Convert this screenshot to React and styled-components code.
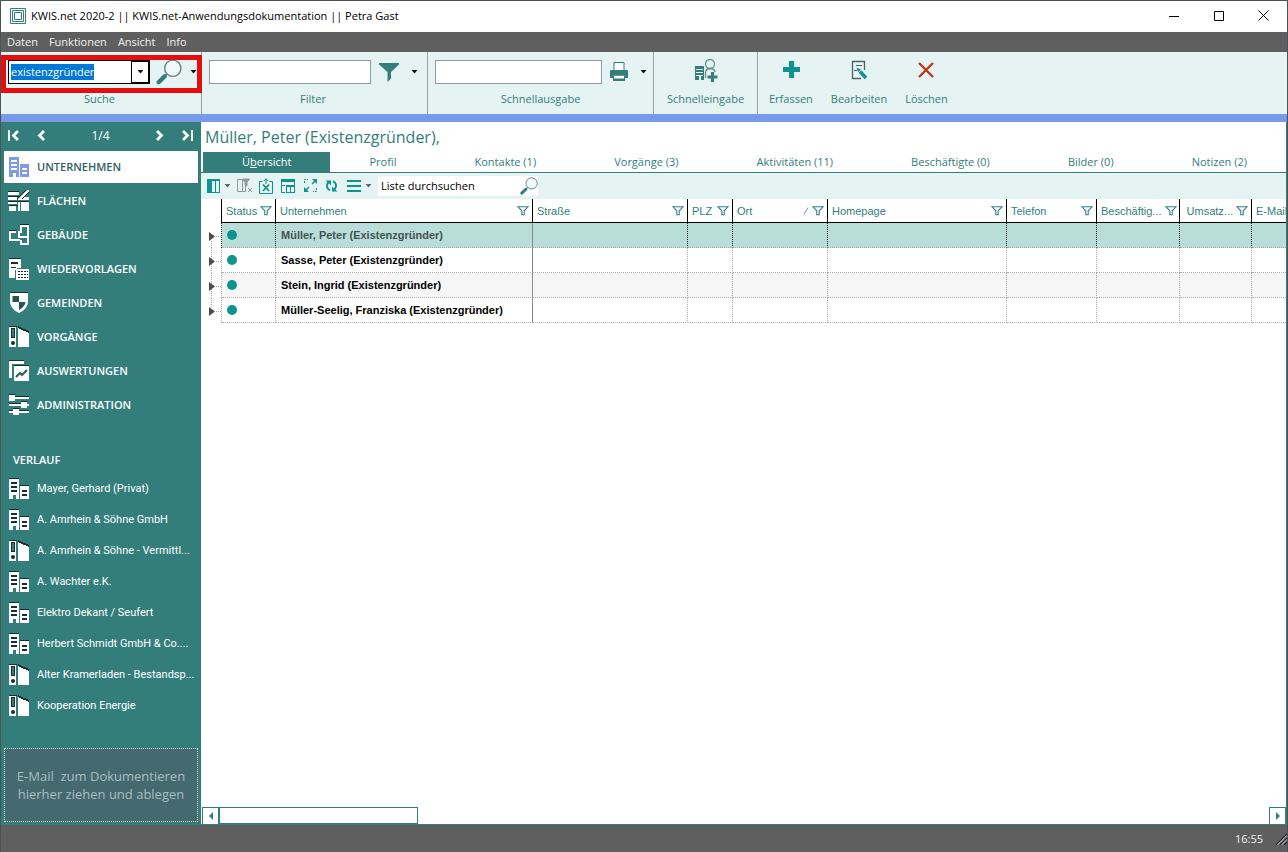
import { useEffect, useRef } from "react";
import styled, { createGlobalStyle, css } from "styled-components";

const teal = "#337e7b";
const bright = "#0f9390";
const pale = "#e5f4f3";
const grey = "#5f5f5f";
const ink = "#16302f";

const navItems = [
  { label: "UNTERNEHMEN", icon: "company", active: true },
  { label: "FLÄCHEN", icon: "areas" },
  { label: "GEBÄUDE", icon: "floorplan" },
  { label: "WIEDERVORLAGEN", icon: "followup" },
  { label: "GEMEINDEN", icon: "shield" },
  { label: "VORGÄNGE", icon: "binder" },
  { label: "AUSWERTUNGEN", icon: "report" },
  { label: "ADMINISTRATION", icon: "sliders" },
];

const historyItems = [
  { label: "Mayer, Gerhard (Privat)", icon: "company" },
  { label: "A. Amrhein & Söhne GmbH", icon: "company" },
  { label: "A. Amrhein & Söhne - Vermittl...", icon: "binder" },
  { label: "A. Wachter e.K.", icon: "company" },
  { label: "Elektro Dekant / Seufert", icon: "company" },
  { label: "Herbert Schmidt GmbH & Co....", icon: "company" },
  { label: "Alter Kramerladen - Bestandsp...", icon: "binder" },
  { label: "Kooperation Energie", icon: "binder" },
];

const tabs = [
  "Profil",
  "Kontakte (1)",
  "Vorgänge (3)",
  "Aktivitäten (11)",
  "Beschäftigte (0)",
  "Bilder (0)",
  "Notizen (2)",
];

const columns = [
  { label: "Status", width: 54 },
  { label: "Unternehmen", width: 257, solid: true },
  { label: "Straße", width: 155 },
  { label: "PLZ", width: 45 },
  { label: "Ort", width: 95, sorted: true },
  { label: "Homepage", width: 179 },
  { label: "Telefon", width: 90 },
  { label: "Beschäftig...", width: 83, right: true },
  { label: "Umsatz...", width: 72, right: true },
  { label: "E-Mail", width: 160 },
];

const rows = [
  "Müller, Peter (Existenzgründer)",
  "Sasse, Peter (Existenzgründer)",
  "Stein, Ingrid (Existenzgründer)",
  "Müller-Seelig, Franziska (Existenzgründer)",
];

function SideIcon({ name, active }) {
  const fill = active ? "#8099e6" : "#fff";
  const line = active ? "#fff" : ink;
  return (
    <Svg width="22" height="22" viewBox="0 0 22 22" fill={fill} shapeRendering="crispEdges">
      {name === "company" && (
        <>
          {!active && <path fill={ink} d="M1 0h10v1H1zM12 7h9v1h-9z" />}
          <path d="M1 1h10v20H8v-4H5v4H1zM12 8h9v13h-9z" />
          <path fill={line} d="M3 4h6v2H3zM3 8h6v2H3zM3 12h6v2H3zM14 12h5v2h-5zM14 16h5v2h-5z" />
        </>
      )}
      {name === "areas" && (
        <>
          <path fill={ink} d="M0 1h11v1H0zM0 6h11v1H0zM0 11h21v1H0zM12 7h9v1h-9zM1 15h9v1H1z" />
          <path d="M0 2h11v3H0zM0 7h9v3H0zM0 12h9v2H0zM1 16h7v5H1zM10 12h2v9h-2zM13 12h8v9h-8z" />
          <path d="M10 9 19 0h2v2l-5 5h5v3H10z" shapeRendering="auto" />
          <path d="M9 9 18 0M14 9l7-7" stroke={ink} fill="none" shapeRendering="auto" />
        </>
      )}
      {name === "floorplan" && (
        <>
          <path d="M12 1h9v20h-9v-5h2v3h5V3h-5v4h-2zM1 7h7v2H3v6h9v2H1zM10 7h4v2h-2v3h7v2h-9z" />
          <path fill={ink} d="M12 0h9v1h-9zM1 6h7v1H1z" />
        </>
      )}
      {name === "followup" && (
        <>
          <path fill={ink} d="M1 0h12v1H1z" />
          <path d="M1 1h12v9H9v2H7v8H1zM8 11h13v11H8z" />
          <path fill={ink} d="M3 4h7v2H3zM3 9h5v1H3z" />
          <path
            fill={ink}
            d="M10 13h2v1h-2zM13 13h2v1h-2zM16 13h2v1h-2zM10 16h2v1h-2zM13 16h2v1h-2zM16 16h2v1h-2zM10 19h2v1h-2zM13 19h2v1h-2zM16 19h2v1h-2zM19 13h1v1h-1zM19 16h1v1h-1zM19 19h1v1h-1z"
          />
        </>
      )}
      {name === "shield" && (
        <g shapeRendering="auto">
          <path fill={ink} d="M2 0h18v2H2z" />
          <path d="M2 1h18v8c0 6-4 9.500-9 12-5-2.500-9-6-9-12z" />
          <path fill="#235553" d="M4.500 4H11v6H4.500zM11 10h6.500c-.4 3.500-3 6-6.500 8z" />
        </g>
      )}
      {name === "binder" && (
        <>
          <path fill={ink} d="M1 0h8v1H1zM10 0l11 5v2L10 2z" />
          <path d="M1 1h7v20H1zM10 2l11 5v14H10z" />
          <path fill={ink} d="M3 2h4v10H3z" />
          <path fill={teal} d="M4 3h2v8H4z" />
          <circle cx="5" cy="17" r="2" fill={ink} shapeRendering="auto" />
        </>
      )}
      {name === "report" && (
        <>
          <path fill={ink} d="M1 0h15v1H1zM6 5h15v1H6z" />
          <path d="M1 1h15v3H4v14H1zM6 6h15v15H6z" />
          <path
            d="m8 17 4-4 2 2 5-5"
            fill="none"
            stroke="#2b5f5d"
            strokeWidth="2"
            shapeRendering="auto"
          />
        </>
      )}
      {name === "sliders" && (
        <>
          <path fill={ink} d="M1 0h6v1H1zM7 2h14v1H7zM1 9h12v1H1zM13 7h6v1h-6zM1 16h4v1H1zM11 16h10v1H11zM5 14h6v1H5z" />
          <path d="M1 3h20v2H1zM1 10h20v2H1zM1 17h20v2H1zM1 1h6v6H1zM13 8h6v6h-6zM5 15h6v6H5z" />
        </>
      )}
    </Svg>
  );
}

function Magnifier({ size }) {
  return (
    <Svg width={size} height={size} viewBox="0 0 24 24" fill="none">
      <circle cx="15.500" cy="8.500" r="7.500" stroke="#6c7f80" strokeWidth="1.300" fill="#eefafa" />
      <path d="m10 14-3 3" stroke="#6c7f80" strokeWidth="1.300" />
      <path d="m8 16-5.500 5.500" stroke={teal} strokeWidth="4" strokeLinecap="round" />
    </Svg>
  );
}

function Caret({ color = "#111" }) {
  return (
    <Svg width="7" height="4" viewBox="0 0 7 4" fill={color}>
      <path d="M.5 0h6L3.500 3.500z" />
    </Svg>
  );
}

function FunnelOutline() {
  return (
    <Svg width="12" height="10" viewBox="0 0 12 10" fill="none" stroke="#2f7f86" strokeWidth="1.100">
      <path d="M1 .8h10L7.200 4.800v4H4.800v-4z" />
    </Svg>
  );
}

function Chevron({ dir, bar }) {
  const d = dir === "left" ? "M10 2 5.500 6.500 10 11" : "M4 2 8.500 6.500 4 11";
  const barD = dir === "left" ? "M12 2 7.500 6.500 12 11" : "M2 2 6.500 6.500 2 11";
  return (
    <Svg width="14" height="13" viewBox="0 0 14 13" fill="none" stroke="#fff" strokeWidth="2.800">
      <path d={bar ? barD : d} />
      {bar && <path d={dir === "left" ? "M3 1v11" : "M11 1v11"} strokeWidth="2" />}
    </Svg>
  );
}

export default function App() {
  const searchRef = useRef(null);

  useEffect(() => {
    searchRef.current.focus();
    searchRef.current.select();
  }, []);

  return (
    <>
      <GlobalStyle />
      <Window>
        <TitleBar>
          <Svg width="16" height="16" viewBox="0 0 16 16" fill="none" stroke={teal}>
            <path d="M.5.5h15v15H.5zM2.500 2.500h11v11h-11zM4.500 4.500h7v7h-7z" />
          </Svg>
          <WindowTitle>KWIS.net 2020-2 || KWIS.net-Anwendungsdokumentation || Petra Gast</WindowTitle>
          <WindowButton type="button" aria-label="Minimieren">
            <Svg width="10" height="10" viewBox="0 0 10 10" stroke="#000">
              <path d="M0 5.500h10" />
            </Svg>
          </WindowButton>
          <WindowButton type="button" aria-label="Maximieren">
            <Svg width="10" height="10" viewBox="0 0 10 10" stroke="#000" fill="none">
              <path d="M.5.5h9v9h-9z" />
            </Svg>
          </WindowButton>
          <WindowButton type="button" aria-label="Schließen">
            <Svg width="11" height="11" viewBox="0 0 11 11" stroke="#000">
              <path d="m.5.5 10 10m0-10-10 10" />
            </Svg>
          </WindowButton>
        </TitleBar>

        <MenuBar>
          <MenuButton type="button">Daten</MenuButton>
          <MenuButton type="button">Funktionen</MenuButton>
          <MenuButton type="button">Ansicht</MenuButton>
          <MenuButton type="button">Info</MenuButton>
        </MenuBar>

        <Ribbon>
          <Group $width={201} $end={3}>
            <GroupRow>
              <Combo>
                <ComboInput ref={searchRef} aria-label="Suche" defaultValue="existenzgründer" />
                <ComboButton type="button" aria-label="Suchverlauf öffnen">
                  <Caret />
                </ComboButton>
              </Combo>
              <IconButton type="button" aria-label="Suchen">
                <Magnifier size={26} />
              </IconButton>
              <CaretButton type="button" aria-label="Suchoptionen">
                <Caret />
              </CaretButton>
            </GroupRow>
            <GroupLabel>Suche</GroupLabel>
            <Highlight />
          </Group>

          <Group $width={226} $end={3}>
            <GroupRow>
              <RibbonInput id="filter" />
              <IconButton type="button" aria-label="Filtern">
                <Svg width="20" height="19" viewBox="0 0 20 19" fill={teal}>
                  <path d="M0 0h20v1.500L12 9v6.500L8.500 19V9L0 1.500z" />
                </Svg>
              </IconButton>
              <CaretButton type="button" aria-label="Filteroptionen">
                <Caret />
              </CaretButton>
            </GroupRow>
            <GroupLabel as="label" htmlFor="filter">
              Filter
            </GroupLabel>
          </Group>

          <Group $width={226}>
            <GroupRow>
              <RibbonInput id="output" />
              <IconButton type="button" aria-label="Drucken">
                <Svg width="18" height="20" viewBox="0 0 18 20" fill={teal}>
                  <path d="M4 .5h10v8H4z" fill="#fff" stroke={teal} />
                  <path d="M1 8h16q1 0 1 1v7h-3v-2.500H3V16H0V9q0-1 1-1z" />
                  <path d="M3 13.500h12V19H3z" />
                  <path d="M4 14h10v2.500H4z" fill="#fff" />
                </Svg>
              </IconButton>
              <CaretButton type="button" aria-label="Druckoptionen">
                <Caret />
              </CaretButton>
            </GroupRow>
            <GroupLabel as="label" htmlFor="output">
              Schnellausgabe
            </GroupLabel>
          </Group>

          <Group $width={104}>
            <ActionButton type="button">
              <Svg width="24" height="24" viewBox="0 0 24 24" fill={teal}>
                <path d="M1 8h9v14H7v-4H5v4H1z" />
                <path d="M2 11.500h7M2 14.500h7M2 17.500h7" stroke={pale} />
                <circle cx="16" cy="6" r="4.500" fill={pale} stroke="#5f8f8f" strokeWidth="1.300" />
                <path d="M11.500 20v-5q0-4.500 4.500-4.500t5 3.500" fill="none" stroke="#5f8f8f" strokeWidth="1.300" />
                <path d="M17 14h3v3.500h3.500v3H20V24h-3v-3.500h-3.500v-3H17z" />
              </Svg>
              Schnelleingabe
            </ActionButton>
          </Group>

          <Actions>
            <ActionButton type="button">
              <Svg width="24" height="24" viewBox="0 0 24 24" fill={bright} shapeRendering="crispEdges">
                <path d="M10 3h5v6h6v5h-6v6h-5v-6H4V9h6z" />
              </Svg>
              Erfassen
            </ActionButton>
            <ActionButton type="button">
              <Svg width="24" height="24" viewBox="0 0 24 24" fill="none">
                <path d="M17.500 12V3.500h-12v17H14" stroke="#4c6364" strokeWidth="1.300" />
                <path d="M9 7.500h6M7 12.500h3" stroke="#4c6364" />
                <path d="m13 13.500 6 6.500" stroke={bright} strokeWidth="3.600" />
                <path d="m9.500 9.500 4.500 2-3 2.800z" fill={bright} />
              </Svg>
              Bearbeiten
            </ActionButton>
            <ActionButton type="button">
              <Svg width="24" height="24" viewBox="0 0 24 24" stroke="#b83d14" strokeWidth="2.400">
                <path d="m4 5 14 14M18 5 4 19" />
              </Svg>
              Löschen
            </ActionButton>
          </Actions>
        </Ribbon>

        <Body>
          <Sidebar>
            <Pager>
              <PagerButton type="button" aria-label="Erster Datensatz">
                <Chevron dir="left" bar />
              </PagerButton>
              <PagerButton type="button" aria-label="Vorheriger Datensatz">
                <Chevron dir="left" />
              </PagerButton>
              <PagerText>1/4</PagerText>
              <PagerButton type="button" aria-label="Nächster Datensatz">
                <Chevron dir="right" />
              </PagerButton>
              <PagerButton type="button" aria-label="Letzter Datensatz">
                <Chevron dir="right" bar />
              </PagerButton>
            </Pager>
            <Nav>
              {navItems.map(({ label, icon, active }) => (
                <NavLink key={label} href="#" $active={active}>
                  <SideIcon name={icon} active={active} />
                  {label}
                </NavLink>
              ))}
            </Nav>
            <HistoryTitle>VERLAUF</HistoryTitle>
            <History>
              {historyItems.map(({ label, icon }) => (
                <HistoryLink key={label} href="#">
                  <SideIcon name={icon} />
                  {label}
                </HistoryLink>
              ))}
            </History>
            <DropZone>
              E-Mail {"\u00a0"}zum Dokumentieren
              <br />
              hierher ziehen und ablegen
            </DropZone>
          </Sidebar>

          <Main>
            <RecordTitle>Müller, Peter (Existenzgründer),</RecordTitle>
            <Tabs role="tablist">
              <Tab type="button" role="tab" aria-selected="true" $active>
                Ü<u>b</u>ersicht
              </Tab>
              {tabs.map((label) => (
                <Tab key={label} type="button" role="tab" aria-selected="false">
                  {label}
                </Tab>
              ))}
            </Tabs>

            <ListTools>
              <ToolButton type="button" aria-label="Spalten">
                <Svg width="16" height="16" viewBox="0 0 16 16" fill={bright} shapeRendering="crispEdges">
                  <path d="M1 1h13v14H1z" />
                  <path d="M6 3h3v11H6zM10 3h3v11h-3z" fill={pale} />
                </Svg>
                <Caret color="#666" />
              </ToolButton>
              <ToolButton type="button" aria-label="Filter entfernen">
                <Svg width="16" height="16" viewBox="0 0 16 16" fill="none" stroke="#8b9a9a">
                  <path d="M.5 1.500h5v12h-5zM8.500 7v6.500H5.500" />
                  <path d="M5.500 1h7L10 4.500V8L8 7V4.500z" fill="#8b9a9a" />
                  <path d="m11 10 4 4m0-4-4 4" />
                </Svg>
              </ToolButton>
              <ToolButton type="button" aria-label="Excel-Export">
                <Svg width="16" height="16" viewBox="0 0 16 16" fill="none" stroke={bright}>
                  <path d="M3.500 3.500H.5v12h13v-12h-3" />
                  <path d="m4 6.500 6 6.500m0-6.500-6 6.500" strokeWidth="1.800" />
                  <path d="M7 6V.8M4.800 3 7 .8 9.200 3" />
                </Svg>
              </ToolButton>
              <ToolButton type="button" aria-label="Ansicht speichern">
                <Svg width="16" height="16" viewBox="0 0 16 16" fill="none" stroke={bright} shapeRendering="crispEdges">
                  <path d="M0 1h14v3H0z" fill={bright} stroke="none" />
                  <path d="M.5 4v10.500H4M0 7.500h4M13.500 4v3" />
                  <path d="M5.500 7.500h8v7h-8zM5 8.500h9M9.500 8v7" />
                </Svg>
              </ToolButton>
              <ToolButton type="button" aria-label="Vollbild">
                <Svg width="16" height="16" viewBox="0 0 16 16" fill={bright}>
                  <path d="M9 1h5v5zM1 9v5h5z" />
                  <path d="m9 6 3-3M3 12l3-3" stroke={bright} strokeWidth="1.500" />
                  <path d="M1.500 5V1.500H5M13.500 10v3.500H10" fill="none" stroke={bright} strokeDasharray="2 1" />
                </Svg>
              </ToolButton>
              <ToolButton type="button" aria-label="Aktualisieren">
                <Svg width="16" height="16" viewBox="0 0 16 16" fill="none" stroke={bright} strokeWidth="2">
                  <path d="M5 12.500C1.500 10.500 1 7 3.500 4.200M8 3.200c3.500 1.800 4 5.300 1.500 8.300" />
                  <path d="M.5 2.500h5.500v5zM12.500 13.500H7v-5z" fill={bright} stroke="none" />
                </Svg>
              </ToolButton>
              <ToolButton type="button" aria-label="Menü">
                <Svg width="16" height="16" viewBox="0 0 16 16" fill={bright} shapeRendering="crispEdges">
                  <path d="M0 2h14v2H0zM0 7h14v2H0zM0 12h14v2H0z" />
                </Svg>
                <Caret color="#666" />
              </ToolButton>
              <ListSearch>
                <ListSearchInput aria-label="Liste durchsuchen" defaultValue="Liste durchsuchen" />
                <IconButton type="button" aria-label="Liste durchsuchen starten">
                  <Magnifier size={18} />
                </IconButton>
              </ListSearch>
            </ListTools>

            <TableScroll>
              <Table>
                <colgroup>
                  <col width="21" />
                  {columns.map(({ label, width }) => (
                    <col key={label} width={width} />
                  ))}
                </colgroup>
                <thead>
                  <tr>
                    <GutterHead aria-label="Details" />
                    {columns.map(({ label, sorted, right }) => (
                      <HeadCell key={label} scope="col">
                        <HeadContent>
                          <HeadText $right={right}>{label}</HeadText>
                          {sorted && (
                            <Svg width="6" height="8" viewBox="0 0 6 8" stroke="#8b9a9a">
                              <path d="M1 7.500 5 .5" />
                            </Svg>
                          )}
                          <FunnelOutline />
                        </HeadContent>
                      </HeadCell>
                    ))}
                  </tr>
                </thead>
                <tbody>
                  {rows.map((name, i) => (
                    <Row key={name} $selected={i === 0} $striped={i === 2}>
                      <Gutter>
                        <Svg width="20" height="25" viewBox="0 0 20 25" fill="none" shapeRendering="crispEdges">
                          <path
                            d={i === 0 ? "M10.500 18v7" : i === rows.length - 1 ? "M10.500 0v9" : "M10.500 0v25"}
                            stroke="#aaa"
                            strokeDasharray="1 1"
                          />
                          <path d="M15 13.500h5" stroke="#aaa" strokeDasharray="1 1" />
                          <path d="M8 9v9l6-4.500z" fill="#4c4c4c" shapeRendering="auto" />
                        </Svg>
                      </Gutter>
                      {columns.map(({ label, solid }, c) => (
                        <Cell key={label} $solid={solid} $selected={i === 0}>
                          {c === 0 && <StatusDot />}
                          {c === 1 && name}
                        </Cell>
                      ))}
                    </Row>
                  ))}
                </tbody>
              </Table>
            </TableScroll>

            <ScrollBar>
              <ScrollButton type="button" aria-label="Nach links">
                <Svg width="4" height="8" viewBox="0 0 4 8" fill={teal}>
                  <path d="M4 0v8L0 4z" />
                </Svg>
              </ScrollButton>
              <ScrollThumb />
              <ScrollButton type="button" aria-label="Nach rechts">
                <Svg width="4" height="8" viewBox="0 0 4 8" fill={teal}>
                  <path d="M0 0v8l4-4z" />
                </Svg>
              </ScrollButton>
            </ScrollBar>
          </Main>
        </Body>

        <StatusBar>
          <span>16:55</span>
          <Svg width="12" height="12" viewBox="0 0 12 12" stroke="#1d1d1d" strokeWidth="1.200">
            <path d="M1 12 12 1M5 12l7-7M9 12l3-3" />
            <path d="M2.500 12 12 2.500M6.500 12 12 6.500" stroke="#a5a5a5" />
          </Svg>
        </StatusBar>
      </Window>
    </>
  );
}

const GlobalStyle = createGlobalStyle`
  * {
    box-sizing: border-box;
  }

  body {
    margin: 0;
    font-family: "Open Sans", "Noto Sans", sans-serif;
    font-size: 11px;
    line-height: 16px;
    color: ${teal};
  }

  button,
  input {
    font: inherit;
    color: inherit;
    border: none;
    padding: 0;
    margin: 0;
    background: none;
    outline: none;
  }

  a {
    color: inherit;
    text-decoration: none;
  }
`;

const Svg = styled.svg`
  display: block;
  flex: none;
`;

const Window = styled.div`
  display: flex;
  flex-direction: column;
  min-height: 100vh;
  border: 1px solid #4c5353;
  border-bottom: none;
  background: #fff;
`;

const TitleBar = styled.header`
  display: flex;
  align-items: center;
  height: 31px;
  padding: 0 1px 2px 9px;
  background: #fff;
  color: #000;
`;

const WindowTitle = styled.span`
  flex: 1;
  padding-left: 5px;
`;

const WindowButton = styled.button`
  display: flex;
  align-items: center;
  justify-content: center;
  width: 45px;
  height: 29px;
`;

const MenuBar = styled.nav`
  display: flex;
  gap: 11px;
  height: 20px;
  padding-left: 6px;
  background: ${grey};
  color: #f1f1f1;
`;

const MenuButton = styled.button``;

const Ribbon = styled.div`
  display: flex;
  height: 70px;
  background: ${pale};
  border-bottom: 8px solid #779aeb;
`;

const Group = styled.div`
  position: relative;
  display: flex;
  flex-direction: column;
  width: ${({ $width }) => $width}px;
  padding: 6px ${({ $end = 0 }) => $end}px 0 0;
  border-right: 1px solid #8fa3a3;
`;

const GroupRow = styled.div`
  display: flex;
  align-items: center;
  height: 28px;
  padding-left: 7px;
`;

const GroupLabel = styled.span`
  padding-top: 5px;
  text-align: center;
`;

const Highlight = styled.div`
  position: absolute;
  inset: 3px -1px 21px 0;
  border: 5px solid #e60d0d;
  pointer-events: none;
`;

const Combo = styled.div`
  display: flex;
  width: 142px;
  height: 24px;
  margin-right: 6px;
  background: #fff;
  border: 1px solid #000;
`;

const ComboInput = styled.input`
  flex: 1;
  min-width: 0;
  padding-left: 2px;
  color: #000;

  &::selection {
    background: #0078d7;
    color: #fff;
  }
`;

const ComboButton = styled.button`
  display: flex;
  align-items: center;
  justify-content: center;
  width: 18px;
  border: 1px solid #000;
`;

const RibbonInput = styled.input`
  flex: 1;
  min-width: 0;
  height: 24px;
  margin-right: 8px;
  padding: 0 4px;
  background: #fff;
  border: 1px solid #8d9c9c;
`;

const IconButton = styled.button`
  display: flex;
  align-items: center;
  justify-content: center;
`;

const CaretButton = styled.button`
  display: flex;
  align-items: center;
  justify-content: center;
  width: 19px;
  height: 24px;
  margin-left: 6px;
`;

const Actions = styled.div`
  display: flex;
  padding: 6px 0 0 2px;
`;

const ActionButton = styled.button`
  display: flex;
  flex-direction: column;
  align-items: center;
  gap: 9px;
  padding: 0 9px;
`;

const Body = styled.div`
  display: flex;
  flex: 1;
  border-right: 1px solid ${teal};
  border-bottom: 1px solid ${teal};
`;

const Sidebar = styled.aside`
  display: flex;
  flex-direction: column;
  width: 200px;
  flex: none;
  padding: 0 3px 2px;
  background: ${teal};
  color: #fff;
`;

const Pager = styled.div`
  display: flex;
  align-items: center;
  height: 29px;
  padding: 0 3px 2px 2px;
  gap: 14px;
`;

const PagerButton = styled.button`
  display: flex;
`;

const PagerText = styled.span`
  flex: 1;
  font-size: 12px;
  text-align: center;
`;

const Nav = styled.nav`
  display: flex;
  flex-direction: column;
  gap: 2px;
`;

const NavLink = styled.a`
  display: flex;
  align-items: center;
  gap: 7px;
  height: 32px;
  padding-left: 4px;
  font-weight: 600;
  white-space: nowrap;

  ${({ $active }) =>
    $active &&
    css`
      background: #fff;
      color: #2d6361;
    `}
`;

const HistoryTitle = styled.h2`
  margin: 31px 0 5px 9px;
  font-size: 11px;
  font-weight: 600;
`;

const History = styled.nav`
  display: flex;
  flex-direction: column;
  font-family: Roboto, "Open Sans", sans-serif;
`;

const HistoryLink = styled.a`
  display: flex;
  align-items: center;
  gap: 7px;
  height: 31px;
  padding-left: 4px;
  white-space: nowrap;
`;

const DropZone = styled.div`
  display: flex;
  flex-direction: column;
  justify-content: center;
  height: 74px;
  margin-top: auto;
  border: 1px dotted #d8e6e6;
  background: #446a70;
  color: #a9bcbe;
  font-size: 13px;
  line-height: 18px;
  text-align: center;
`;

const Main = styled.main`
  display: flex;
  flex-direction: column;
  flex: 1;
  min-width: 0;
`;

const RecordTitle = styled.h1`
  margin: 0;
  padding-left: 4px;
  font-size: 16px;
  font-weight: 400;
  line-height: 30px;
`;

const Tabs = styled.div`
  display: flex;
  height: 21px;
  padding-left: 2px;
  border-bottom: 1px solid ${teal};
`;

const Tab = styled.button`
  flex: 1 1 auto;
  ${({ $active }) => $active && `background: ${teal}; color: #fff;`}
`;

const ListTools = styled.div`
  display: flex;
  align-items: center;
  gap: 6px;
  height: 26px;
  padding-left: 5px;
  background: ${pale};
`;

const ToolButton = styled.button`
  display: flex;
  align-items: center;
  gap: 2px;
`;

const ListSearch = styled.div`
  display: flex;
  width: 160px;
  height: 20px;
  background: #fff;
`;

const ListSearchInput = styled.input`
  flex: 1;
  min-width: 0;
  padding-left: 3px;
  color: #000;
`;

const TableScroll = styled.div`
  flex: 1;
  overflow: hidden;
`;

const Table = styled.table`
  table-layout: fixed;
  width: 1211px;
  border-collapse: separate;
  border-spacing: 0;
  font-family: "Liberation Sans", Arial, sans-serif;
`;

const GutterHead = styled.th`
  padding: 0;
  border-right: 1px solid #000;
`;

const HeadCell = styled.th`
  height: 24px;
  padding: 0 3px 0 4px;
  border-right: 1px solid #000;
  border-bottom: 1px solid #000;
  font-weight: 400;
  text-align: left;
`;

const HeadContent = styled.div`
  display: flex;
  align-items: center;
  gap: 3px;
`;

const HeadText = styled.span`
  flex: 1;
  white-space: nowrap;
  text-align: ${({ $right }) => ($right ? "right" : "left")};
`;

const Gutter = styled.td`
  height: 25px;
  padding: 0;
  border-right: 1px dotted #b0b0b0;
`;

const Cell = styled.td`
  height: 25px;
  padding: 0 5px;
  border-right: 1px dotted ${({ $selected }) => ($selected ? "#222" : "#b0b0b0")};
  border-bottom: 1px dotted #b0b0b0;
  color: #000;
  font-weight: 700;
  white-space: nowrap;
  ${({ $solid }) => $solid && "border-right: 1px solid #8a8a8a;"}
`;

const Row = styled.tr`
  ${({ $striped }) => $striped && css`${Cell} { background: #f6f6f6; }`}
  ${({ $selected }) =>
    $selected &&
    css`
      ${Cell} {
        background: #b9deda;
        color: #45524f;
      }
      ${Gutter} {
        border-right-color: #222;
      }
    `}
`;

const StatusDot = styled.div`
  width: 10px;
  height: 10px;
  border-radius: 50%;
  background: ${bright};
`;

const ScrollBar = styled.div`
  display: flex;
  height: 17px;
  padding-left: 1px;
`;

const ScrollButton = styled.button`
  display: flex;
  align-items: center;
  justify-content: center;
  width: 17px;
  border: 1px solid ${teal};
  border-bottom: none;

  &:last-child {
    margin-left: auto;
  }
`;

const ScrollThumb = styled.div`
  width: 199px;
  border: 1px solid ${teal};
`;

const StatusBar = styled.footer`
  display: flex;
  align-items: center;
  justify-content: flex-end;
  gap: 12px;
  height: 27px;
  background: ${grey};
  color: #f1f1f1;
`;
